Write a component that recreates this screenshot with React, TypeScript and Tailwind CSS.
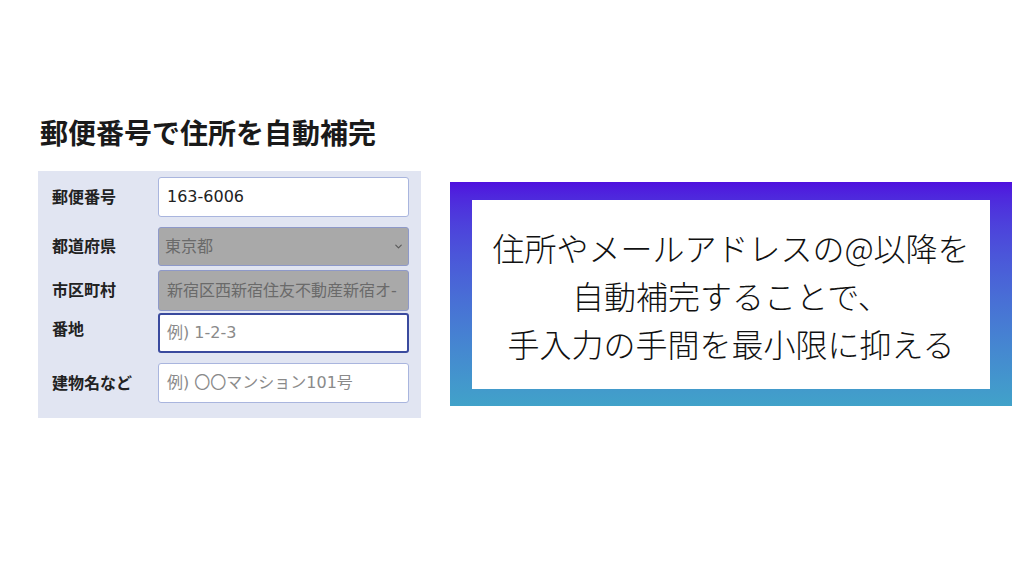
import { ChevronDown } from 'lucide-react'

const jp = { fontFamily: '"Noto Sans CJK JP", "Noto Sans", sans-serif' }
const inputFont = { fontFamily: '"DejaVu Sans", "Noto Sans CJK JP", sans-serif' }

function Field({ label, children, className = '', labelClass = '' }: { label: string; children: React.ReactNode; className?: string; labelClass?: string }) {
  return (
    <div className={`flex items-center ${className}`}>
      <div className={`w-[106px] shrink-0 text-[16px] font-bold text-[#222] pb-[3px] ${labelClass}`}>{label}</div>
      <div className="flex-1" style={inputFont}>{children}</div>
    </div>
  )
}

export default function App() {
  return (
    <div className="w-[1024px] h-[576px] bg-white overflow-hidden" style={jp}>
      <div className="flex pt-[113px] pl-[38px]">
        {/* Left: demo form */}
        <div className="w-[383px] shrink-0">
          <h1 className="pl-[2px] text-[28px] leading-[38px] font-bold text-[#1a1a1a]">郵便番号で住所を自動補完</h1>
          <div className="mt-[20px] bg-[#e1e5f2] pl-[14px] pr-[12px] pt-[6px] pb-[15px]">
            <Field label="郵便番号">
              <div className="h-[40px] rounded-[3px] border border-[#a9b5de] bg-white px-[8px] flex items-center text-[16px] text-[#222]">
                163-6006
              </div>
            </Field>
            <Field label="都道府県" className="mt-[10px]">
              <div className="h-[39px] rounded-[3px] border border-[#8e99c9] bg-[#a9a9a9] pl-[6px] pr-[4px] flex items-center justify-between text-[16px] text-[#6a6a6a]">
                <span>東京都</span>
                <ChevronDown size={11} strokeWidth={2.5} className="text-[#5a5a5a]" />
              </div>
            </Field>
            <Field label="市区町村" className="mt-[4px]">
              <div className="h-[41px] rounded-[3px] border border-[#8e99c9] bg-[#a9a9a9] px-[8px] flex items-center text-[16px] text-[#6a6a6a] whitespace-nowrap overflow-hidden">
                新宿区西新宿住友不動産新宿オ-
              </div>
            </Field>
            <Field label="番地" className="mt-[2px]" labelClass="pb-[10px]">
              <div className="h-[40px] rounded-[3px] border-2 border-[#3a4a9e] bg-white px-[7px] flex items-center text-[16px] text-[#8a8a8a]">
                例) 1-2-3
              </div>
            </Field>
            <Field label="建物名など" className="mt-[10px]">
              <div className="h-[40px] rounded-[3px] border border-[#a9b5de] bg-white px-[8px] flex items-center text-[16px] text-[#8a8a8a]">
                例) 〇〇マンション101号
              </div>
            </Field>
          </div>
        </div>

        {/* Right: caption box */}
        <div className="ml-[29px] mt-[69px] w-[562px] h-[224px] bg-gradient-to-b from-[#4f0fde] to-[#41a2c9] px-[22px] pt-[18px] pb-[17px]">
          <div className="h-full bg-white flex flex-col items-center justify-center text-[32px] leading-[48px] font-light text-[#111] text-center">
            <p>住所やメールアドレスの@以降を</p>
            <p>自動補完することで、</p>
            <p>手入力の手間を最小限に抑える</p>
          </div>
        </div>
      </div>
    </div>
  )
}
